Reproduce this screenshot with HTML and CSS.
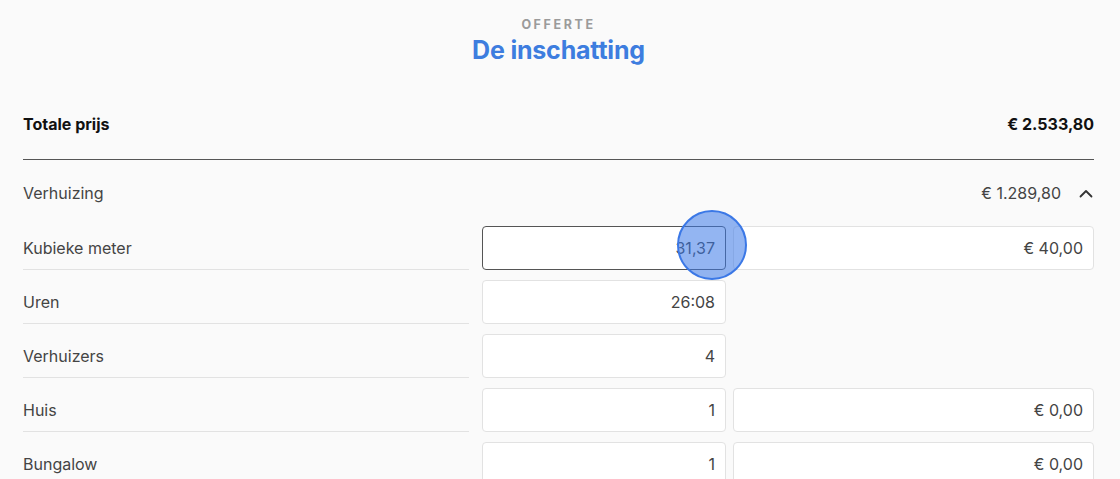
FILE: index.html
```html
<!DOCTYPE html>
<html lang="nl">
<head>
  <meta charset="UTF-8">
  <meta name="viewport" content="width=device-width, initial-scale=1.0">
  <title>Offerte - De inschatting</title>
  <link rel="stylesheet" href="styles.css">
</head>
<body>
  <div class="container">
    <header class="page-head">
      <div class="eyebrow">OFFERTE</div>
      <h1>De inschatting</h1>
    </header>

    <div class="total">
      <span>Totale prijs</span>
      <span>€ 2.533,80</span>
    </div>

    <div class="section-head">
      <span>Verhuizing</span>
      <span class="section-sum">
        € 1.289,80
        <svg class="chevron" width="14" height="9" viewBox="0 0 14 9">
          <path d="M1.5 7.5 L7 2 L12.5 7.5" fill="none" stroke="#333" stroke-width="1.8" stroke-linecap="round" stroke-linejoin="round"/>
        </svg>
      </span>
    </div>

    <div class="rows">
      <div class="row">
        <div class="label">Kubieke meter</div>
        <div class="field focused">31,37</div>
        <div class="field">€ 40,00</div>
      </div>
      <div class="row">
        <div class="label">Uren</div>
        <div class="field">26:08</div>
      </div>
      <div class="row">
        <div class="label">Verhuizers</div>
        <div class="field">4</div>
      </div>
      <div class="row">
        <div class="label">Huis</div>
        <div class="field">1</div>
        <div class="field">€ 0,00</div>
      </div>
      <div class="row">
        <div class="label">Bungalow</div>
        <div class="field">1</div>
        <div class="field">€ 0,00</div>
      </div>
    </div>

    <!-- click indicator -->
    <div class="tap"></div>
  </div>
</body>
</html>
```

FILE: styles.css
```css
body {
  margin: 0;
  background-color: #fafafa;
  font-family: Inter, "Noto Sans", sans-serif;
  color: #404040;
}
.container {
  position: relative;
  padding: 0 26px 0 23px;
}
.page-head {
  text-align: center;
  padding-top: 17px;
}
.eyebrow {
  font-size: 12.5px;
  font-weight: 700;
  letter-spacing: 2.6px;
  color: #9b9b9b;
  line-height: 16px;
}
h1 {
  margin: 2px 0 0;
  font-size: 25px;
  font-weight: 700;
  color: #3d7ddf;
  line-height: 30px;
  letter-spacing: -0.2px;
}
.total {
  display: flex;
  justify-content: space-between;
  align-items: center;
  margin-top: 37px;
  height: 44px;
  font-size: 16px;
  font-weight: 700;
  color: #111;
  border-bottom: 1px solid #555;
  padding-bottom: 13px;
}
.section-head {
  display: flex;
  justify-content: space-between;
  align-items: center;
  height: 66px;
  font-size: 16px;
  color: #444;
}
.section-sum {
  display: flex;
  align-items: center;
  gap: 18px;
}
.chevron {
  margin-right: 1px;
}
.rows {
  display: flex;
  flex-direction: column;
  gap: 10px;
}
.row {
  display: grid;
  grid-template-columns: 446px 244px 1fr;
  column-gap: 13px;
  height: 44px;
}
.row .field + .field {
  margin-left: -6px;
}
.label {
  display: flex;
  align-items: center;
  font-size: 16px;
  color: #444;
  border-bottom: 1px solid #e2e2e2;
}
.field {
  display: flex;
  align-items: center;
  justify-content: flex-end;
  padding-right: 10px;
  background-color: #fff;
  border: 1px solid #e2e2e2;
  border-radius: 4px;
  font-size: 16px;
  color: #444;
}
.field.focused {
  border-color: #555;
}
.tap {
  position: absolute;
  left: 677px;
  top: 210px;
  width: 66px;
  height: 66px;
  border-radius: 50%;
  background-color: rgba(58, 120, 232, 0.55);
  border: 2.5px solid #3b78e6;
}
```
